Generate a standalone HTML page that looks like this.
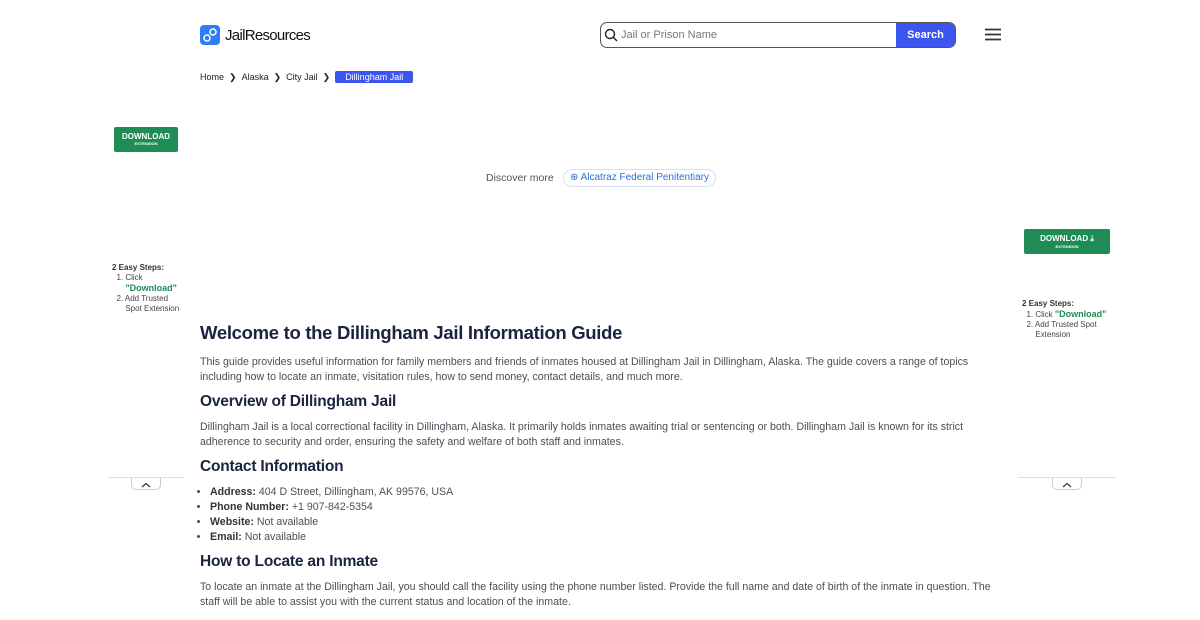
<!DOCTYPE html>
<html><head><meta charset="utf-8"><style>
*{margin:0;padding:0;box-sizing:border-box}
body{width:1200px;height:620px;overflow:hidden;background:#fff;font-family:"Liberation Sans",sans-serif;color:#4a4f57;position:relative}
.abs{position:absolute}
.logo{left:200px;top:25px;display:flex;align-items:center;font-size:15px;color:#111;letter-spacing:-0.7px}
.logo .ic{width:20px;height:20px;background:#2f7cf6;border-radius:4px;margin-right:5px;position:relative}
.search{left:600px;top:22px;width:356px;height:26px;border:1px solid #555;border-radius:7px;overflow:hidden;display:flex}
.search .in{flex:1;font-size:11px;color:#777;padding-left:20px;line-height:24px;position:relative}
.search .btn{width:59px;background:#3d55f0;color:#fff;font-weight:bold;font-size:11px;text-align:center;line-height:24px}
.crumb{left:200px;top:71px;font-size:9px;color:#222;display:flex;align-items:center;gap:5px}
.crumb .cur{background:#3d55f0;color:#fff;padding:1px 10px;border-radius:2px}
.dl{background:#1f8c55;color:#fff;font-weight:bold;text-align:center;border-radius:2px}
.steps{font-size:8px;color:#444;line-height:10px}
.steps .g{color:#1f8c55;font-weight:bold;font-size:9px}
h1{position:absolute;left:200px;top:322px;font-size:18.5px;color:#1a2340;letter-spacing:-0.3px}
h2{position:absolute;left:200px;font-size:15.5px;color:#1a2340;letter-spacing:-0.2px}
p,ul{position:absolute;left:200px;width:800px;font-size:10.6px;line-height:15px;color:#4a4f57}
ul{left:210px;list-style:disc}
b{color:#333}
.fold{width:76px;border-top:1px solid #ddd;height:1px}
.tab{width:30px;height:12px;border:1px solid #ccc;border-top:none;border-radius:0 0 5px 5px;background:#fff}
</style></head><body>
<div class="abs logo"><div class="ic"><svg width="20" height="20"><circle cx="7" cy="13" r="3" stroke="#fff" stroke-width="1.5" fill="none"/><circle cx="13" cy="7" r="3" stroke="#fff" stroke-width="1.5" fill="none"/></svg></div>JailResources</div>
<div class="abs search"><div class="in"><svg class="abs" style="left:3px;top:5px" width="14" height="14"><circle cx="6" cy="6" r="4.5" stroke="#222" stroke-width="1.4" fill="none"/><line x1="9.5" y1="9.5" x2="13" y2="13" stroke="#222" stroke-width="1.4"/></svg>Jail or Prison Name</div><div class="btn">Search</div></div>
<svg class="abs" style="left:985px;top:28px" width="16" height="13"><path d="M0 1.5H16M0 6.5H16M0 11.5H16" stroke="#333" stroke-width="1.8"/></svg>
<div class="abs crumb">Home <span>❯</span> Alaska <span>❯</span> City Jail <span>❯</span> <span class="cur">Dillingham Jail</span></div>
<div class="abs dl" style="left:114px;top:127px;width:64px;height:25px;font-size:8px;padding-top:5px">DOWNLOAD<div style="font-size:4px">EXTENSION</div></div>
<div class="abs steps" style="left:112px;top:263px"><b>2 Easy Steps:</b><br>&nbsp;&nbsp;1. Click<br>&nbsp;&nbsp;&nbsp;&nbsp;&nbsp;&nbsp;<span class="g">"Download"</span><br>&nbsp;&nbsp;2. Add Trusted<br>&nbsp;&nbsp;&nbsp;&nbsp;&nbsp;&nbsp;Spot Extension</div>
<div class="abs dl" style="left:1024px;top:229px;width:86px;height:25px;font-size:8px;padding-top:5px">DOWNLOAD ⤓<div style="font-size:4px">EXTENSION</div></div>
<div class="abs steps" style="left:1022px;top:299px"><b>2 Easy Steps:</b><br>&nbsp;&nbsp;1. Click <span class="g">"Download"</span><br>&nbsp;&nbsp;2. Add Trusted Spot<br>&nbsp;&nbsp;&nbsp;&nbsp;&nbsp;&nbsp;Extension</div>
<div class="abs fold" style="left:108px;top:477px"></div><div class="abs tab" style="left:131px;top:478px"><svg width="28" height="11"><path d="M10 7L14 3.5L18 7" stroke="#333" stroke-width="1.2" fill="none"/></svg></div>
<div class="abs fold" style="left:1018px;top:477px;width:98px"></div><div class="abs tab" style="left:1052px;top:478px"><svg width="28" height="11"><path d="M10 7L14 3.5L18 7" stroke="#333" stroke-width="1.2" fill="none"/></svg></div>
<div class="abs" style="left:486px;top:172px;font-size:10.5px;color:#555">Discover more</div>
<div class="abs" style="left:563px;top:169px;height:18px;padding:0 6px;border:1px solid #d6e0f0;border-radius:9px;font-size:10px;color:#2b6fd6;line-height:16px">⊕ Alcatraz Federal Penitentiary</div>
<h1>Welcome to the Dillingham Jail Information Guide</h1>
<p style="top:355px">This guide provides useful information for family members and friends of inmates housed at Dillingham Jail in Dillingham, Alaska. The guide covers a range of topics including how to locate an inmate, visitation rules, how to send money, contact details, and much more.</p>
<h2 style="top:393px">Overview of Dillingham Jail</h2>
<p style="top:420px">Dillingham Jail is a local correctional facility in Dillingham, Alaska. It primarily holds inmates awaiting trial or sentencing or both. Dillingham Jail is known for its strict adherence to security and order, ensuring the safety and welfare of both staff and inmates.</p>
<h2 style="top:458px">Contact Information</h2>
<ul style="top:485px"><li><b>Address:</b> 404 D Street, Dillingham, AK 99576, USA</li><li><b>Phone Number:</b> +1 907-842-5354</li><li><b>Website:</b> Not available</li><li><b>Email:</b> Not available</li></ul>
<h2 style="top:553px">How to Locate an Inmate</h2>
<p style="top:580px">To locate an inmate at the Dillingham Jail, you should call the facility using the phone number listed. Provide the full name and date of birth of the inmate in question. The staff will be able to assist you with the current status and location of the inmate.</p>
</body></html>
